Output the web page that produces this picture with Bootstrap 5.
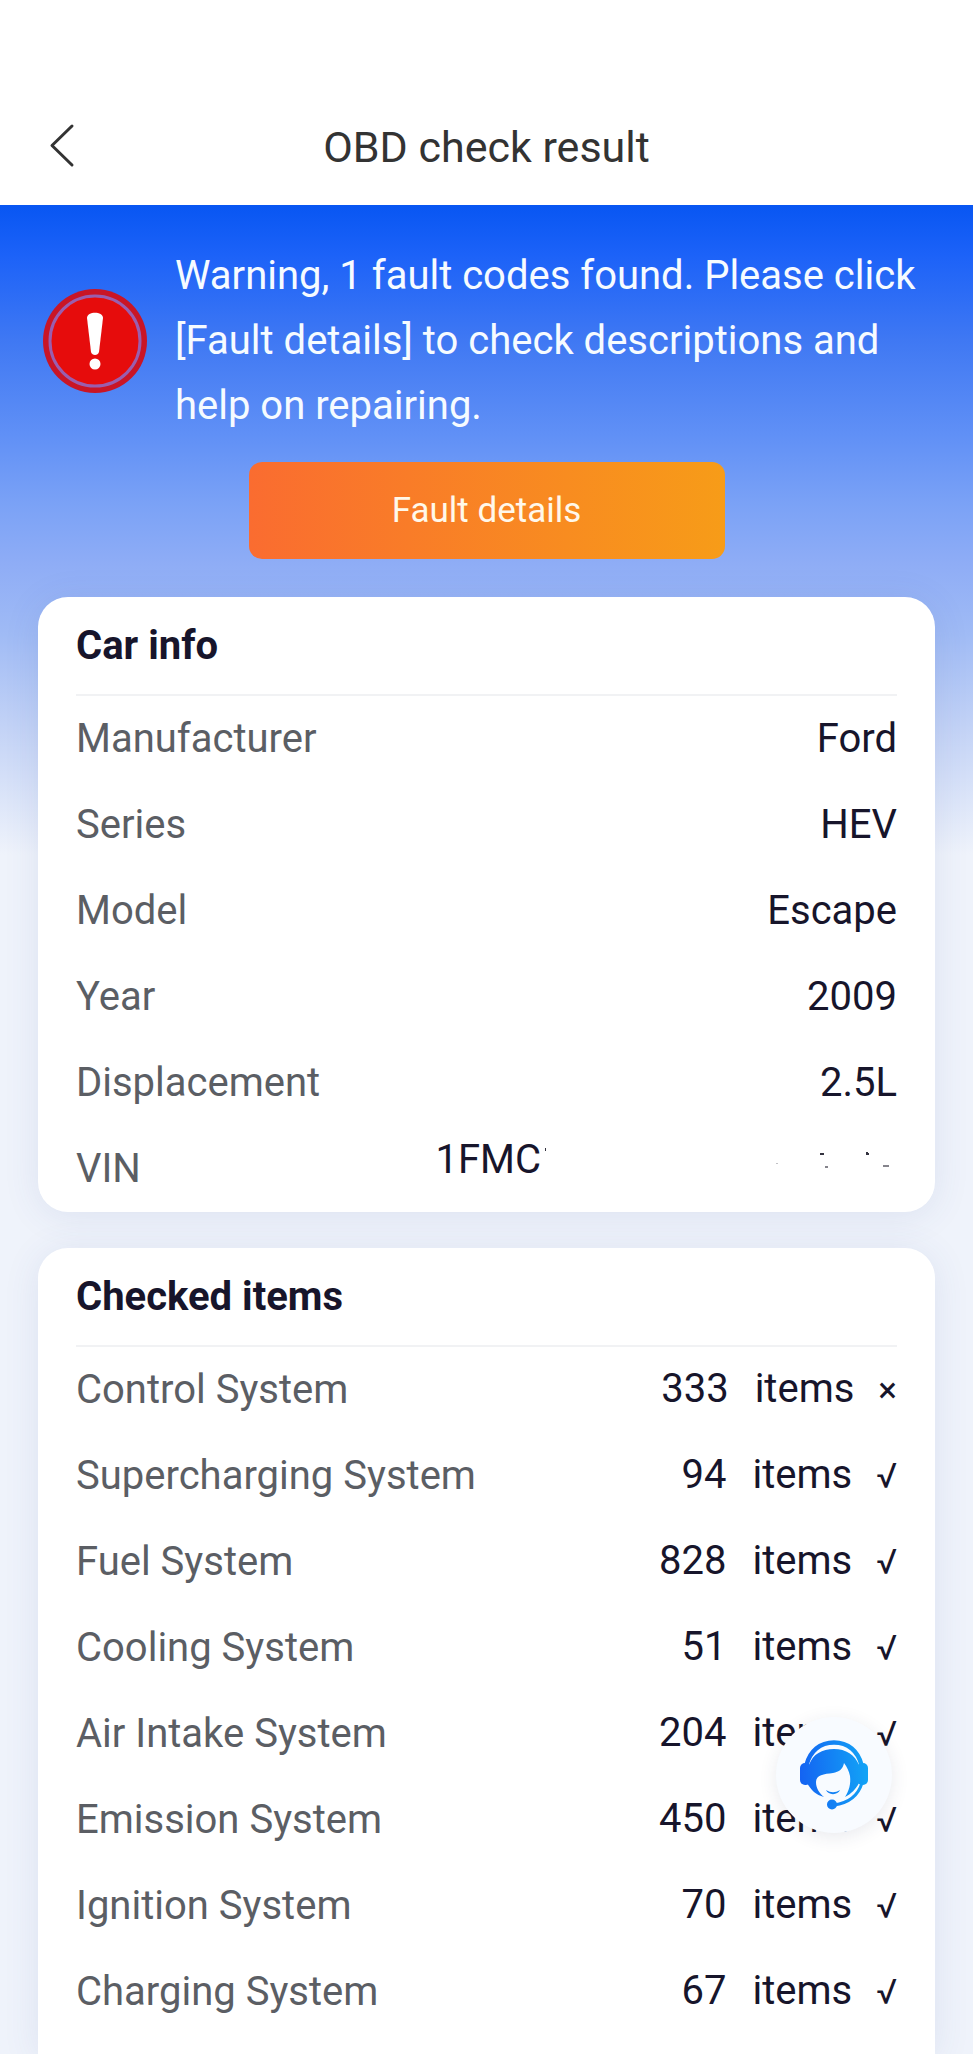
<!DOCTYPE html>
<html lang="en">
<head>
<meta charset="utf-8">
<meta name="viewport" content="width=device-width, initial-scale=1">
<title>OBD check result</title>
<link rel="stylesheet" href="https://cdn.jsdelivr.net/npm/bootstrap@5.3.0/dist/css/bootstrap.min.css">
<style>
  body { font-family: Roboto, "Liberation Sans", sans-serif; font-size: 40px; line-height: 60px; color: #17152b; background: #eff3fb; }
  .app-bar { padding: 88px 38px 0; background: #fff; }
  .app-bar-inner { height: 117px; }
  .app-title { font-size: 43px; line-height: 60px; color: #333; }
  .back-btn { width: 48px; height: 60px; }
  .result-page { padding: 38px 38px 0; background: linear-gradient(#0856f2 0, #1c62f8 50px, #3f78f3 135px, #6090f6 230px, #7ba2f6 300px, #8fadf6 360px, #a0bbf5 430px, #c2d2f6 520px, #eff3fb 650px); }
  .alert-row { gap: 27px; padding-left: 4px; color: #f6fbff; }
  .alert-text { line-height: 65px; }
  .fault-btn { width: 476px; height: 97px; margin: 24px 0 38px; padding: 2px 0 0; border-radius: 13px; font-size: 35px; color: #fff8ea; background: linear-gradient(90deg, #fa6c30, #f79c18); }
  .fault-btn:hover { color: #fff; }
  .info-card { padding: 0 38px; border-radius: 30px; background: #fff; box-shadow: 0 4px 36px rgba(60, 80, 150, .1); }
  .info-card + .info-card { margin-top: 36px; }
  .info-card.is-open { border-radius: 30px 30px 0 0; }
  .card-heading { height: 99px; border-bottom: 2px solid #f1f2f4; font-size: 40px; line-height: 98px; }
  .info-table th, .info-table td { height: 86px; padding: 0; vertical-align: middle; font-weight: 400; }
  .info-table th { color: #5b5e64; }
  .info-table td { text-align: right; }
  .item-count { margin-right: 16px; }
  .item-state { margin-left: 14px; font-size: 35px; }
  .vin-value { height: 60px; padding-bottom: 18px; line-height: 42px; }
  .support-btn { right: 81px; bottom: 221px; width: 116px; height: 116px; background: #f8fbff; box-shadow: 0 4px 18px rgba(40, 50, 90, .1); }
</style>
</head>
<body class="d-flex flex-column min-vh-100">
<header class="app-bar">
  <div class="app-bar-inner d-flex align-items-center">
    <button type="button" class="back-btn btn p-0 border-0 d-flex align-items-center" aria-label="Back">
      <svg width="48" height="48" viewBox="0 0 48 48" fill="none" stroke="#333" stroke-width="3" stroke-linecap="round" stroke-linejoin="round" aria-hidden="true"><path d="M34 3 14 22.500 34 42"/></svg>
    </button>
    <h1 class="app-title flex-grow-1 text-center fw-normal m-0">OBD check result</h1>
    <span class="back-btn"></span>
  </div>
</header>

<main class="result-page d-flex flex-column flex-grow-1">
  <section class="alert-row d-flex align-items-center">
    <svg class="flex-shrink-0" width="106" height="106" viewBox="0 0 106 106" aria-hidden="true">
      <circle cx="53" cy="53" r="52" fill="#c91526"/>
      <circle cx="53" cy="53" r="45" fill="#e60c0c" stroke="#9a5eae" stroke-width="3"/>
      <path fill="#fff" d="M45 30c0-7 16-7 16 0l-4 34c-1 4-7 4-8 0z"/>
      <circle cx="53" cy="76" r="5.500" fill="#fff"/>
    </svg>
    <p class="alert-text m-0">Warning, 1 fault codes found. Please click [Fault details] to check descriptions and help on repairing.</p>
  </section>
  <button type="button" class="fault-btn btn border-0 align-self-center">Fault details</button>

  <section class="info-card">
    <h2 class="card-heading fw-bold m-0">Car info</h2>
    <table class="info-table w-100">
      <tbody>
        <tr><th scope="row">Manufacturer</th><td>Ford</td></tr>
        <tr><th scope="row">Series</th><td>HEV</td></tr>
        <tr><th scope="row">Model</th><td>Escape</td></tr>
        <tr><th scope="row">Year</th><td>2009</td></tr>
        <tr><th scope="row">Displacement</th><td>2.5L</td></tr>
        <tr><th scope="row">VIN</th><td><div class="vin-value d-flex justify-content-end align-items-center"><span>1FMC</span><svg width="356" height="30" viewBox="0 0 356 30" aria-hidden="true"><g fill="#33323f"><path d="M4 3h1v3h-1zM279 8h4v2h-4zM325 7h2v1h1v2h-3z"/><path opacity=".6" d="M284 21h3v2h-3zM342 20h6v2h-6z"/><path opacity=".3" d="M235 18h2v1h-2z"/></g></svg></div></td></tr>
      </tbody>
    </table>
  </section>

  <section class="info-card is-open flex-grow-1">
    <h2 class="card-heading fw-bold m-0">Checked items</h2>
    <table class="info-table w-100">
      <tbody>
        <tr><th scope="row">Control System</th><td><span class="item-count">333</span> items <span class="item-state">×</span></td></tr>
        <tr><th scope="row">Supercharging System</th><td><span class="item-count">94</span> items <span class="item-state">√</span></td></tr>
        <tr><th scope="row">Fuel System</th><td><span class="item-count">828</span> items <span class="item-state">√</span></td></tr>
        <tr><th scope="row">Cooling System</th><td><span class="item-count">51</span> items <span class="item-state">√</span></td></tr>
        <tr><th scope="row">Air Intake System</th><td><span class="item-count">204</span> items <span class="item-state">√</span></td></tr>
        <tr><th scope="row">Emission System</th><td><span class="item-count">450</span> items <span class="item-state">√</span></td></tr>
        <tr><th scope="row">Ignition System</th><td><span class="item-count">70</span> items <span class="item-state">√</span></td></tr>
        <tr><th scope="row">Charging System</th><td><span class="item-count">67</span> items <span class="item-state">√</span></td></tr>
      </tbody>
    </table>
  </section>
</main>

<button type="button" class="support-btn btn border-0 rounded-circle p-0 position-fixed d-flex align-items-center justify-content-center" aria-label="Customer support">
  <svg width="68" height="70" viewBox="0 0 68 70" aria-hidden="true">
    <defs><linearGradient id="headset" gradientUnits="userSpaceOnUse" x1="0" y1="35" x2="68" y2="30"><stop offset="0" stop-color="#1463f2"/><stop offset="1" stop-color="#12a4f6"/></linearGradient></defs>
    <g fill="url(#headset)">
      <!-- hair, open around the face -->
      <path d="M9 25C13 14 22 9 34 9s21 6 25 16v18c-3 6-8 11-14 14 4-6 6-13 5-21-1-5-3-9-6-13-1 6-5 9-11 10-9 1-17 2-17 9 0 6 3 11 8 15-8-2-13-7-17-14z"/>
      <rect x="0" y="23" width="11" height="22" rx="5"/>
      <rect x="57" y="23" width="11" height="22" rx="5"/>
      <circle cx="32" cy="64.500" r="5"/>
      <path d="M26 50c5 3 9 3 14 0-2 5.500-12 5.500-14 0z"/>
    </g>
    <g fill="none" stroke="url(#headset)" stroke-linecap="round">
      <path stroke-width="4.500" d="M6.500 25C10 11 20 2.500 34 2.500S58 11 61.500 25"/>
      <path stroke-width="3" d="M62 43c-4 13-13 20-28 22"/>
    </g>
  </svg>
</button>
<script src="https://cdn.jsdelivr.net/npm/bootstrap@5.3.0/dist/js/bootstrap.bundle.min.js"></script>
</body>
</html>
